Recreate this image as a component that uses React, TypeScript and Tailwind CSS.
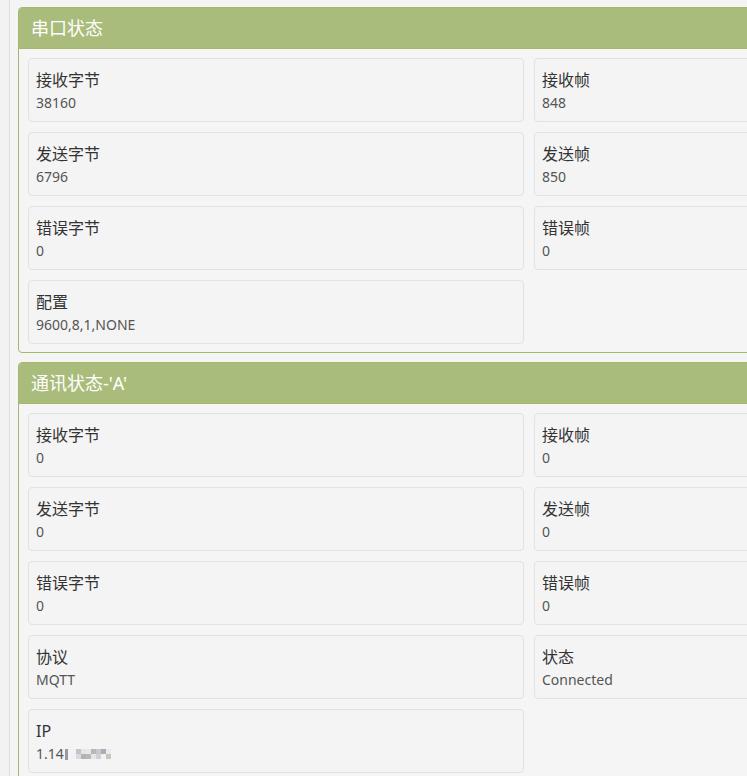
import type { ReactNode } from "react"

type Item = { label: string; value: ReactNode }

const serialItems: Item[] = [
  { label: "接收字节", value: "38160" },
  { label: "接收帧", value: "848" },
  { label: "发送字节", value: "6796" },
  { label: "发送帧", value: "850" },
  { label: "错误字节", value: "0" },
  { label: "错误帧", value: "0" },
  { label: "配置", value: "9600,8,1,NONE" },
]

// pixelated (blurred) part of the address
const mosaicTop = ["#f1f2f3", "#c4c4c8", "#e2e6e9", "#e6e8ea", "#b7b7ba", "#c7c8cb", "#a9adb6", "#e9ecef"]
const mosaicBottom = ["#f0f1f2", "#d9dadd", "#b3b3b6", "#b9b9bc", "#e4e6e8", "#d0d1d3", "#f2f2f2", "#cbc6bd"]

function MaskedIp() {
  return (
    <span className="inline-flex items-center">
      1.14
      <span className="ml-[1px] inline-block h-[11px] w-[3px] bg-[#9a9ba0]" />
      <span className="ml-[3px] inline-flex flex-col">
        <span className="flex">
          {mosaicTop.map((c, i) => (
            <span key={i} className="inline-block h-[5px] w-[5px]" style={{ backgroundColor: c }} />
          ))}
        </span>
        <span className="flex">
          {mosaicBottom.map((c, i) => (
            <span key={i} className="inline-block h-[5px] w-[5px]" style={{ backgroundColor: c }} />
          ))}
        </span>
      </span>
    </span>
  )
}

const commItems: Item[] = [
  { label: "接收字节", value: "0" },
  { label: "接收帧", value: "0" },
  { label: "发送字节", value: "0" },
  { label: "发送帧", value: "0" },
  { label: "错误字节", value: "0" },
  { label: "错误帧", value: "0" },
  { label: "协议", value: "MQTT" },
  { label: "状态", value: "Connected" },
  { label: "IP", value: <MaskedIp /> },
]

function StatCard({ item }: { item: Item }) {
  return (
    <div className="h-[64px] rounded-[4px] border border-[#e2e2e2] bg-[#f4f4f4] px-[7px] pt-[9px]">
      <div className="text-[16px] leading-[25px] text-[#333]">{item.label}</div>
      <div className="text-[14px] leading-[20px] text-[#555]">{item.value}</div>
    </div>
  )
}

function Panel({ title, items }: { title: string; items: Item[] }) {
  return (
    <section className="w-[1022px] overflow-hidden rounded-[4px] border border-[#a2b86e] bg-[#f4f5f4]">
      <header className="flex h-[41px] items-center border-b border-[#a2b86e] bg-[#a9bc7b] px-[12px] text-[18px] text-white">
        {title}
      </header>
      <div className="grid grid-cols-2 gap-[10px] px-[9px] pb-[8px] pt-[9px]">
        {items.map((item) => (
          <StatCard key={item.label} item={item} />
        ))}
      </div>
    </section>
  )
}

export default function App() {
  return (
    <div
      className="h-[776px] w-[747px] overflow-hidden bg-[#f2f2f2]"
      style={{ fontFamily: '"Noto Sans", "Noto Sans CJK SC", sans-serif' }}
    >
      <div className="ml-[9px] flex min-h-full flex-col gap-[9px] border-l border-[#dedede] bg-[#f4f4f4] pl-[8px] pt-[7px]">
        <Panel title="串口状态" items={serialItems} />
        <Panel title="通讯状态-'A'" items={commItems} />
      </div>
    </div>
  )
}
